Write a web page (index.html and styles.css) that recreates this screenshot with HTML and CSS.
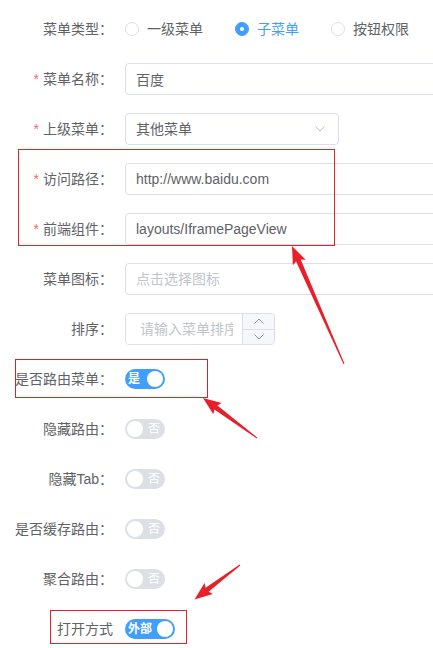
FILE: index.html
```html
<!DOCTYPE html>
<html lang="zh-CN">
<head>
<meta charset="utf-8">
<title>菜单编辑</title>
<link rel="stylesheet" href="styles.css">
</head>
<body>
<div class="page">
  <form class="form">
    <div class="item">
      <label class="label">菜单类型：</label>
      <div class="content radios">
        <span class="radio"><span class="dot"></span><span class="rtext">一级菜单</span></span>
        <span class="radio checked"><span class="dot"></span><span class="rtext">子菜单</span></span>
        <span class="radio"><span class="dot"></span><span class="rtext">按钮权限</span></span>
      </div>
    </div>
    <div class="item">
      <label class="label"><span class="req">*</span>菜单名称：</label>
      <div class="content"><input class="input wide" type="text" value="百度" readonly></div>
    </div>
    <div class="item">
      <label class="label"><span class="req">*</span>上级菜单：</label>
      <div class="content">
        <div class="select"><span>其他菜单</span>
          <svg class="chev" width="10" height="6" viewBox="0 0 10 6"><path d="M0.5 0.5 L5 5 L9.5 0.5" fill="none" stroke="#c0c4cc" stroke-width="1"/></svg>
        </div>
      </div>
    </div>
    <div class="item">
      <label class="label"><span class="req">*</span>访问路径：</label>
      <div class="content"><input class="input wide" type="text" value="http://www.baidu.com" readonly></div>
    </div>
    <div class="item">
      <label class="label"><span class="req">*</span>前端组件：</label>
      <div class="content"><input class="input wide" type="text" value="layouts/IframePageView" readonly></div>
    </div>
    <div class="item">
      <label class="label">菜单图标：</label>
      <div class="content"><input class="input wide" type="text" placeholder="点击选择图标" readonly></div>
    </div>
    <div class="item">
      <label class="label">排序：</label>
      <div class="content">
        <div class="number">
          <input class="num-input" type="text" placeholder="请输入菜单排序" readonly>
          <div class="ctrls">
            <span class="ctrl up"><svg width="10" height="6" viewBox="0 0 10 6"><path d="M0.5 5.5 L5 1 L9.5 5.5" fill="none" stroke="#909399" stroke-width="1"/></svg></span>
            <span class="ctrl down"><svg width="10" height="6" viewBox="0 0 10 6"><path d="M0.5 0.5 L5 5 L9.5 0.5" fill="none" stroke="#909399" stroke-width="1"/></svg></span>
          </div>
        </div>
      </div>
    </div>
    <div class="item">
      <label class="label">是否路由菜单：</label>
      <div class="content"><span class="switch on"><span class="stext">是</span><span class="knob"></span></span></div>
    </div>
    <div class="item">
      <label class="label">隐藏路由：</label>
      <div class="content"><span class="switch off"><span class="knob"></span><span class="stext">否</span></span></div>
    </div>
    <div class="item">
      <label class="label">隐藏Tab：</label>
      <div class="content"><span class="switch off"><span class="knob"></span><span class="stext">否</span></span></div>
    </div>
    <div class="item">
      <label class="label">是否缓存路由：</label>
      <div class="content"><span class="switch off"><span class="knob"></span><span class="stext">否</span></span></div>
    </div>
    <div class="item">
      <label class="label">聚合路由：</label>
      <div class="content"><span class="switch off"><span class="knob"></span><span class="stext">否</span></span></div>
    </div>
    <div class="item">
      <label class="label">打开方式</label>
      <div class="content"><span class="switch on wide-switch"><span class="stext">外部</span><span class="knob"></span></span></div>
    </div>
  </form>

  <div class="mark mark-1"></div>
  <div class="mark mark-2"></div>
  <div class="mark mark-3"></div>

  <svg class="arrows" width="433" height="648" viewBox="0 0 433 648">
    <g fill="#e8202a">
      <polygon points="292,246 292.9,265.3 296.1,261.6 343.5,364.2 344.5,363.8 300.7,259.6 305.7,259.7"/>
      <polygon points="203,398 213.3,414.3 214.4,409.5 256.7,438.4 257.3,437.6 217.4,405.5 221.7,403.1"/>
      <polygon points="194.5,599.5 212.9,594.1 208.6,591.7 240.3,565.4 239.7,564.6 205.6,587.7 204.5,582.9"/>
    </g>
  </svg>
</div>
</body>
</html>
```
FILE: styles.css
```css
html, body {
  margin: 0;
  padding: 0;
  background: #ffffff;
}
body {
  font-family: "Liberation Sans", "Noto Sans CJK SC", sans-serif;
  font-size: 14px;
  color: #606266;
  overflow: hidden;
}
.page {
  position: relative;
  width: 433px;
  height: 648px;
  overflow: hidden;
}
.form {
  padding-top: 13px;
  width: 600px;
}
.item {
  display: flex;
  align-items: center;
  height: 32px;
  margin-bottom: 18px;
}
.label {
  flex: 0 0 125px;
  box-sizing: border-box;
  padding-right: 12px;
  text-align: right;
  white-space: nowrap;
  line-height: 32px;
  color: #606266;
}
.req {
  color: #f56c6c;
  margin-right: 4px;
}
.content {
  flex: 1;
  display: flex;
  align-items: center;
  height: 32px;
}
/* radios */
.radio {
  display: inline-flex;
  align-items: center;
  margin-right: 32px;
  line-height: 20px;
}
.dot {
  box-sizing: border-box;
  width: 14px;
  height: 14px;
  border: 1px solid #dcdfe6;
  border-radius: 50%;
  background: #fff;
  position: relative;
}
.radio.checked .dot {
  background: #409eff;
  border-color: #409eff;
}
.radio.checked .dot::after {
  content: "";
  position: absolute;
  left: 50%;
  top: 50%;
  width: 4px;
  height: 4px;
  margin: -2px 0 0 -2px;
  border-radius: 50%;
  background: #fff;
}
.rtext {
  padding-left: 8px;
}
.radio.checked .rtext {
  color: #409eff;
}
/* inputs */
.input {
  box-sizing: border-box;
  height: 32px;
  border: 1px solid #dcdfe6;
  border-radius: 4px;
  padding: 0 10px;
  font: inherit;
  font-size: 14px;
  color: #606266;
  outline: none;
  background: #fff;
}
.input::placeholder,
.num-input::placeholder {
  color: #c0c4cc;
}
.wide {
  width: 420px;
}
.select {
  box-sizing: border-box;
  width: 214px;
  height: 32px;
  border: 1px solid #dcdfe6;
  border-radius: 4px;
  padding: 0 13px 0 10px;
  display: flex;
  align-items: center;
  justify-content: space-between;
  line-height: 30px;
}
.chev {
  display: block;
}
/* number */
.number {
  box-sizing: border-box;
  width: 150px;
  height: 32px;
  border: 1px solid #dcdfe6;
  border-radius: 4px;
  display: flex;
  overflow: hidden;
}
.num-input {
  flex: 1;
  min-width: 0;
  border: none;
  outline: none;
  padding: 0 9px 0 14px;
  font: inherit;
  font-size: 14px;
  color: #606266;
  background: #fff;
}
.ctrls {
  flex: 0 0 31px;
  display: flex;
  flex-direction: column;
  border-left: 1px solid #dcdfe6;
  background: #f5f7fa;
}
.ctrl {
  flex: 1;
  display: flex;
  align-items: center;
  justify-content: center;
}
.ctrl.up {
  border-bottom: 1px solid #dcdfe6;
}
/* switch */
.switch {
  box-sizing: border-box;
  display: inline-flex;
  align-items: center;
  justify-content: space-between;
  width: 40px;
  height: 20px;
  border-radius: 10px;
  color: #fff;
  font-size: 12px;
  line-height: 20px;
}
.switch.on {
  background: #409eff;
  padding: 0 2px 0 3px;
  font-weight: 700;
}
.switch.off {
  background: #dcdfe6;
  padding: 0 5px 0 2px;
}
.wide-switch {
  width: 50px;
}
.knob {
  width: 16px;
  height: 16px;
  border-radius: 50%;
  background: #fff;
}
.stext {
  display: block;
}
/* annotations */
.mark {
  position: absolute;
  box-sizing: border-box;
  border: 1px solid #e3212b;
}
.mark-1 {
  left: 18px;
  top: 149px;
  width: 317px;
  height: 97px;
}
.mark-2 {
  left: 15px;
  top: 359px;
  width: 193px;
  height: 39px;
  border-color: #d4252b;
}
.mark-3 {
  left: 50px;
  top: 610px;
  width: 137px;
  height: 34px;
}
.arrows {
  position: absolute;
  left: 0;
  top: 0;
  pointer-events: none;
}
```
